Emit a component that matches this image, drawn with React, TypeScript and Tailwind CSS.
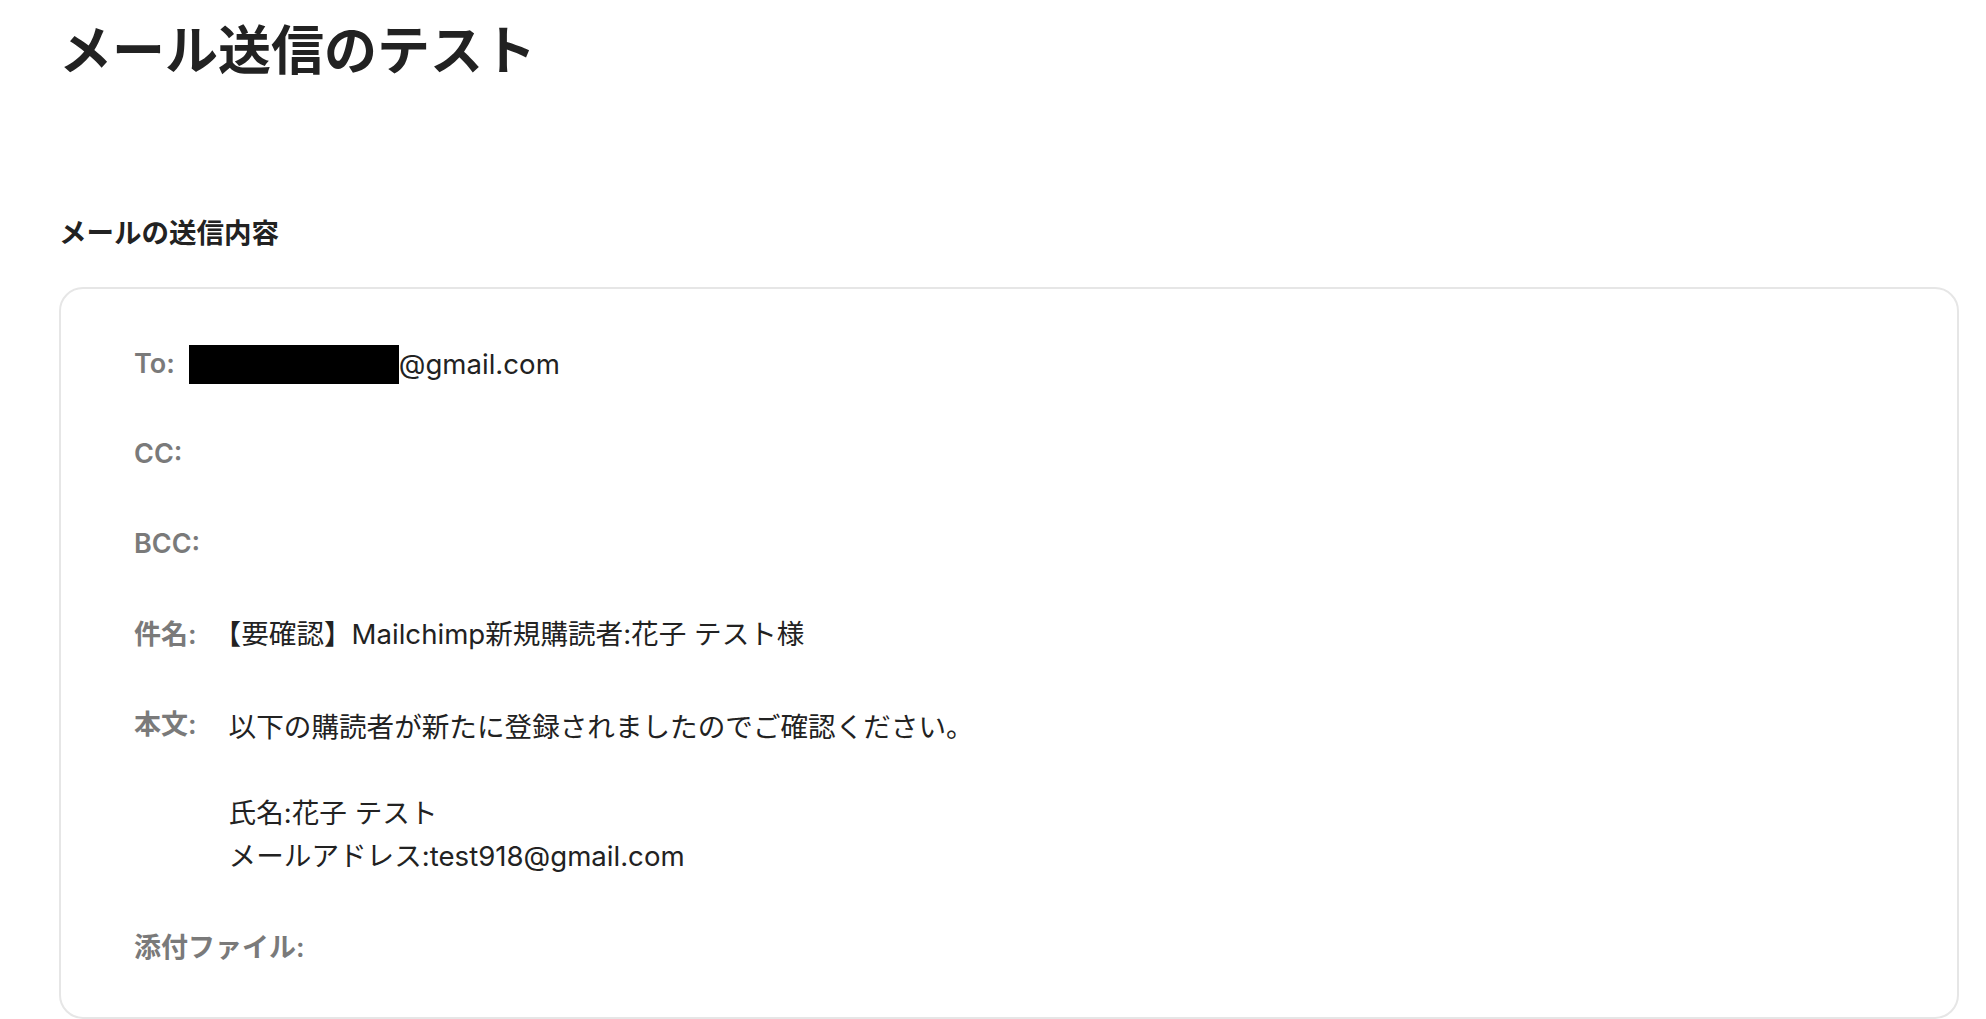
import React from "react";

const font = "font-['Inter','Noto_Sans_CJK_JP',sans-serif]";

function Row({ label, children, top = false, pad = "pl-[14px]" }: { label: string; children?: React.ReactNode; top?: boolean; pad?: string }) {
    return (
        <div className={`flex ${top ? "items-start" : "items-center"} min-h-[40px]`}>
            <span className="text-[27px] leading-[40px] font-semibold text-[#7a7a7a] whitespace-nowrap">
                {label}
            </span>
            <div className={`${pad} text-[27.6px] text-[#222222]`}>{children}</div>
        </div>
    );
}

export default function App() {
    return (
        <div className={`${font} bg-white min-h-[1019px] pl-[59px] pr-[27px] pt-[15px] overflow-hidden`}>
            <h1 className="text-[53px] leading-[72px] font-bold text-[#222222]">メール送信のテスト</h1>

            <h2 className="mt-[128px] text-[27.5px] leading-[36px] font-bold text-[#222222]">
                メールの送信内容
            </h2>

            <div className="mt-[36px] h-[732px] border-2 border-[#e6e6e6] rounded-[24px] pl-[73px] pt-[55px]">
                <div className="flex flex-col gap-[50px]">
                    <Row label="To:" pad="pl-[14px]">
                        <div className="flex items-center leading-[40px]">
                            <span className="inline-block w-[210px] h-[39px] bg-black" />
                            <span>@gmail.com</span>
                        </div>
                    </Row>
                    <Row label="CC:" />
                    <Row label="BCC:" />
                    <Row label="件名:" pad="pl-[17px]">
                        <span className="leading-[40px]">【要確認】Mailchimp新規購読者:花子 テスト様</span>
                    </Row>
                    <Row label="本文:" top pad="pl-[32px]">
                        <div className="pt-[1px] leading-[43px] whitespace-pre-line">
                            {"以下の購読者が新たに登録されましたのでご確認ください。\n\n氏名:花子 テスト\nメールアドレス:test918@gmail.com"}
                        </div>
                    </Row>
                    <Row label="添付ファイル:" />
                </div>
            </div>
        </div>
    );
}
